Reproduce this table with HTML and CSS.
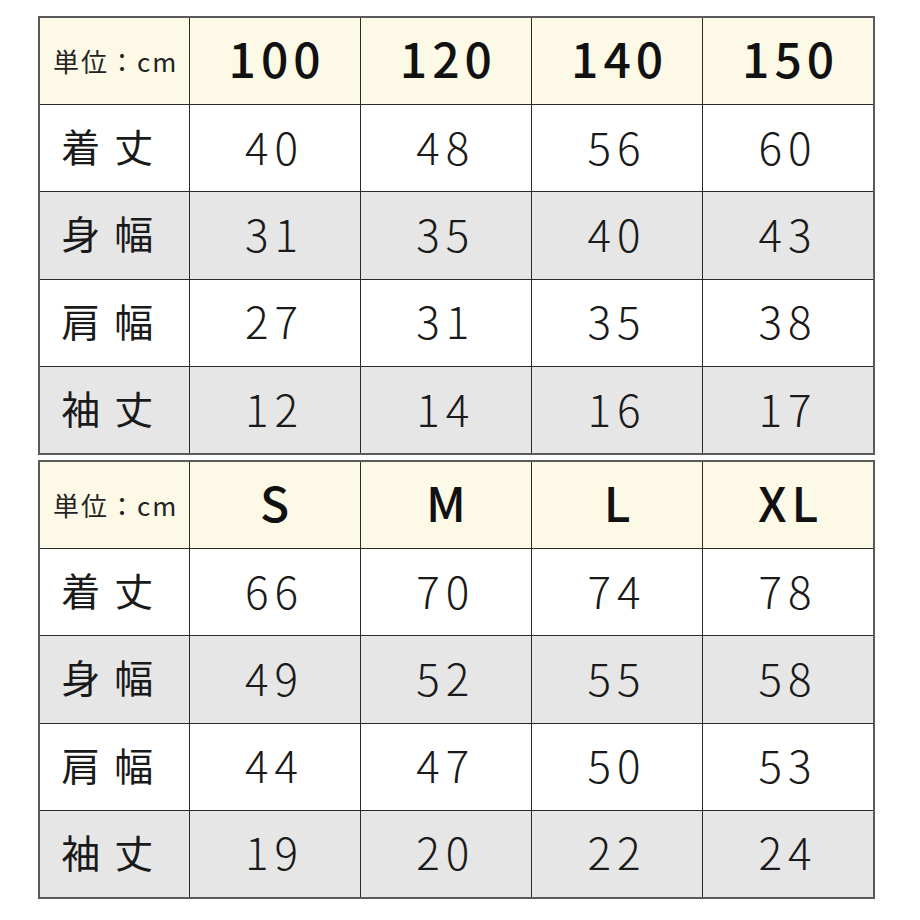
FILE: index.html
```html
<!DOCTYPE html>
<html lang="ja">
<head>
<meta charset="utf-8">
<link rel="stylesheet" href="styles.css">
</head>
<body>
<div class="page">
  <table class="size">
    <tr class="head">
      <th class="unit">単位：cm</th><th>100</th><th>120</th><th>140</th><th>150</th>
    </tr>
    <tr><td class="label">着丈</td><td>40</td><td>48</td><td>56</td><td>60</td></tr>
    <tr class="gray"><td class="label">身幅</td><td>31</td><td>35</td><td>40</td><td>43</td></tr>
    <tr><td class="label">肩幅</td><td>27</td><td>31</td><td>35</td><td>38</td></tr>
    <tr class="gray"><td class="label">袖丈</td><td>12</td><td>14</td><td>16</td><td>17</td></tr>
  </table>
  <table class="size">
    <tr class="head">
      <th class="unit">単位：cm</th><th>S</th><th>M</th><th>L</th><th>XL</th>
    </tr>
    <tr><td class="label">着丈</td><td>66</td><td>70</td><td>74</td><td>78</td></tr>
    <tr class="gray"><td class="label">身幅</td><td>49</td><td>52</td><td>55</td><td>58</td></tr>
    <tr><td class="label">肩幅</td><td>44</td><td>47</td><td>50</td><td>53</td></tr>
    <tr class="gray"><td class="label">袖丈</td><td>19</td><td>20</td><td>22</td><td>24</td></tr>
  </table>
</div>
</body>
</html>
```
FILE: styles.css
```css
html, body {
  margin: 0;
  padding: 0;
  background: #ffffff;
}
.page {
  padding: 16px 0 0 38px;
  display: flex;
  flex-direction: column;
  gap: 5px;
  font-family: "Noto Sans CJK JP", "Noto Sans", sans-serif;
  color: #111;
}
.size {
  width: 837px;
  border-collapse: collapse;
  border: 2px solid #5a5a5a;
  table-layout: fixed;
}
.size th, .size td {
  border: 1px solid #2a2a2a;
  height: 87.4px;
  padding: 0 0 5px 0;
  box-sizing: border-box;
  text-align: center;
  vertical-align: middle;
  line-height: 1;
}
.size th:first-child, .size td:first-child {
  width: 150px;
}
.head th {
  background: #fcf9e6;
  font-size: 48px;
  font-weight: 500;
  letter-spacing: 5px;
  padding-left: 5px;
  padding-bottom: 8px;
}
.head th.unit {
  font-size: 26px;
  font-weight: 400;
  letter-spacing: 2px;
  padding-left: 3px;
  padding-bottom: 0;
  color: #222;
}
.size td {
  font-size: 44px;
  font-weight: 300;
  letter-spacing: 6px;
  color: #1a1a1a;
}
.size td.label {
  font-size: 39px;
  font-weight: 400;
  letter-spacing: 14px;
  padding-left: 0;
}
.gray td {
  background: #e6e6e6;
}
```
